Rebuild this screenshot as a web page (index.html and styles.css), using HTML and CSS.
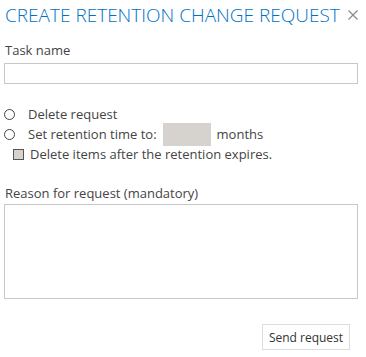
FILE: index.html
```html
<!DOCTYPE html>
<html lang="en">
<head>
    <meta charset="UTF-8">
    <title>Create retention change request</title>
    <link rel="stylesheet" href="styles.css">
</head>
<body>

    <div class="dialog">
        <div class="dialog-header">
            <h1>CREATE RETENTION CHANGE REQUEST</h1>
            <svg class="close" width="10" height="10" viewBox="0 0 10 10">
                <path d="M0.5 0.5 L9.5 9.5 M9.5 0.5 L0.5 9.5" stroke="#8a8a8a" stroke-width="1.2" fill="none"/>
            </svg>
        </div>

        <label class="field-label" for="task">Task name</label>
        <input class="text-input" id="task" type="text">

        <div class="options">
            <div class="option">
                <span class="radio"></span>
                <span>Delete request</span>
            </div>
            <div class="option">
                <span class="radio"></span>
                <span>Set retention time to:</span>
                <span class="months-box"></span>
                <span>months</span>
            </div>
            <div class="option sub">
                <span class="checkbox"></span>
                <span>Delete items after the retention expires.</span>
            </div>
        </div>

        <label class="field-label reason" for="reason">Reason for request (mandatory)</label>
        <textarea class="text-area" id="reason"></textarea>

        <div class="actions">
            <button class="send-button">Send request</button>
        </div>
    </div>

</body>
</html>
```

FILE: styles.css
```css
body {
    margin: 0;
    background-color: white;
    font-family: 'Open Sans', sans-serif;
    color: #444;
}

.dialog {
    padding: 0 8px 0 4px;
    display: flex;
    flex-direction: column;
}

.dialog-header {
    display: flex;
    align-items: center;
    justify-content: space-between;
    height: 30px;
}

h1 {
    margin: 0 0 0 1px;
    font-size: 19px;
    font-weight: 300;
    color: #0072c6;
}

.close {
    margin: 0 0 1px 0;
}

.field-label {
    font-size: 13px;
    margin: 11px 0 4px 1px;
    line-height: 18px;
}

.field-label.reason {
    margin: 20px 0 2px 1px;
}

.text-input {
    box-sizing: border-box;
    width: 354px;
    height: 21px;
    margin: 0;
    border: 1px solid #c8c8c8;
}

.options {
    display: flex;
    flex-direction: column;
    margin-top: 20px;
    font-size: 13px;
}

.option {
    display: flex;
    align-items: center;
    height: 20px;
}

.radio {
    width: 9px;
    height: 9px;
    border: 1px solid #444;
    border-radius: 50%;
    margin-right: 13px;
}

.months-box {
    flex-shrink: 0;
    width: 48px;
    height: 23px;
    background-color: #d6d3ce;
    margin: 0 6px 0 6px;
}

.option.sub {
    padding-left: 9px;
}

.checkbox {
    box-sizing: border-box;
    width: 11px;
    height: 11px;
    border: 1px solid #555;
    background-color: #d6d3ce;
    margin-right: 6px;
}

.text-area {
    box-sizing: border-box;
    width: 354px;
    height: 95px;
    margin: 0;
    border: 1px solid #c8c8c8;
    resize: none;
}

.actions {
    display: flex;
    justify-content: flex-end;
    margin-top: 25px;
    padding-right: 8px;
}

.send-button {
    font-family: 'Open Sans', sans-serif;
    font-size: 12px;
    color: #333;
    background-color: white;
    border: 1px solid #ddd;
    width: 88px;
    height: 26px;
    padding: 0;
}
```
